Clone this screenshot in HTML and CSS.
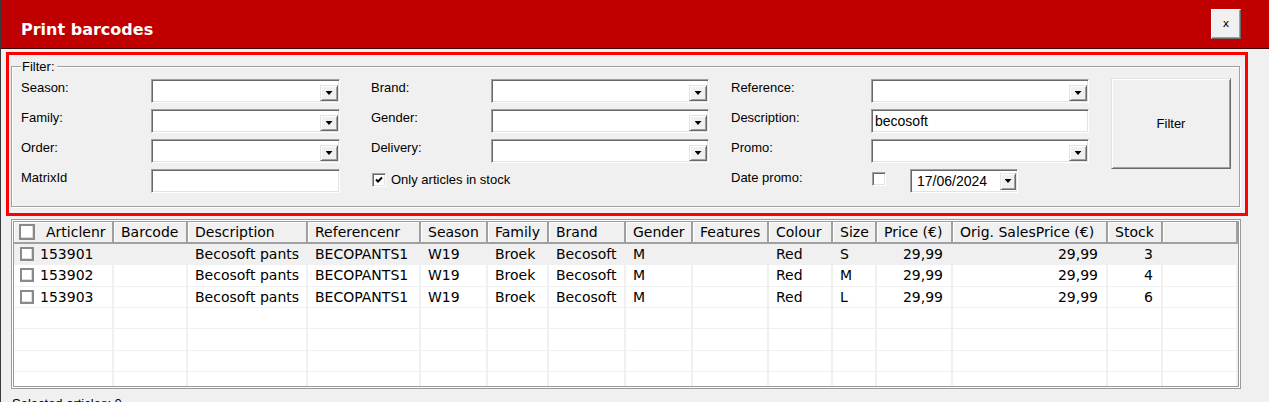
FILE: index.html
```html
<!DOCTYPE html>
<html lang="en">
  <head>
    <meta charset="UTF-8" />
    <meta name="viewport" content="width=device-width, initial-scale=1.0" />
    <title>Print barcodes</title>
    <link rel="stylesheet" href="styles.css">
  </head>
  <body>
    <div class="window">
      <div class="titlebar">
        <span class="title">Print barcodes</span>
        <button class="close">x</button>
      </div>

      <div class="highlight">
        <div class="groupbox">
          <span class="legend">Filter:</span>
          <div class="filters">
            <div class="filter-col col-a">
              <label>Season:</label>
              <div class="combo"><span class="drop"></span></div>
              <label>Family:</label>
              <div class="combo"><span class="drop"></span></div>
              <label>Order:</label>
              <div class="combo"><span class="drop"></span></div>
              <label>MatrixId</label>
              <div class="field"></div>
            </div>

            <div class="filter-col col-b">
              <label>Brand:</label>
              <div class="combo"><span class="drop"></span></div>
              <label>Gender:</label>
              <div class="combo"><span class="drop"></span></div>
              <label>Delivery:</label>
              <div class="combo"><span class="drop"></span></div>
              <div class="check-row">
                <span class="box checked"></span>
                <span>Only articles in stock</span>
              </div>
            </div>

            <div class="filter-col col-c">
              <label>Reference:</label>
              <div class="combo"><span class="drop"></span></div>
              <label>Description:</label>
              <div class="field field-text">becosoft</div>
              <label>Promo:</label>
              <div class="combo"><span class="drop"></span></div>
              <label>Date promo:</label>
              <div class="date-row">
                <span class="box"></span>
                <div class="datepicker">
                  <span>17/06/2024</span>
                  <span class="drop date-drop"></span>
                </div>
              </div>
            </div>

            <button class="filter-btn">Filter</button>
          </div>
        </div>
      </div>

      <div class="grid">
        <table>
          <colgroup>
            <col style="width:100px"><col style="width:74px"><col style="width:120px"><col style="width:113px">
            <col style="width:67px"><col style="width:61px"><col style="width:77px"><col style="width:67px">
            <col style="width:76px"><col style="width:64px"><col style="width:44px"><col style="width:76px">
            <col style="width:155px"><col style="width:55px"><col style="width:75px">
          </colgroup>
          <thead>
            <tr>
              <th class="first"><span class="gbox head-box"></span>Articlenr</th>
              <th>Barcode</th>
              <th>Description</th>
              <th>Referencenr</th>
              <th>Season</th>
              <th>Family</th>
              <th>Brand</th>
              <th>Gender</th>
              <th>Features</th>
              <th>Colour</th>
              <th>Size</th>
              <th>Price (€)</th>
              <th>Orig. SalesPrice (€)</th>
              <th>Stock</th>
              <th></th>
            </tr>
          </thead>
          <tbody>
            <tr class="current">
              <td class="first"><span class="gbox"></span>153901</td>
              <td></td><td>Becosoft pants</td><td>BECOPANTS1</td><td>W19</td><td>Broek</td><td>Becosoft</td><td>M</td><td></td><td>Red</td><td>S</td>
              <td class="num">29,99</td><td class="num">29,99</td><td class="num">3</td><td></td>
            </tr>
            <tr>
              <td class="first"><span class="gbox"></span>153902</td>
              <td></td><td>Becosoft pants</td><td>BECOPANTS1</td><td>W19</td><td>Broek</td><td>Becosoft</td><td>M</td><td></td><td>Red</td><td>M</td>
              <td class="num">29,99</td><td class="num">29,99</td><td class="num">4</td><td></td>
            </tr>
            <tr>
              <td class="first"><span class="gbox"></span>153903</td>
              <td></td><td>Becosoft pants</td><td>BECOPANTS1</td><td>W19</td><td>Broek</td><td>Becosoft</td><td>M</td><td></td><td>Red</td><td>L</td>
              <td class="num">29,99</td><td class="num">29,99</td><td class="num">6</td><td></td>
            </tr>
            <tr><td></td><td></td><td></td><td></td><td></td><td></td><td></td><td></td><td></td><td></td><td></td><td></td><td></td><td></td><td></td></tr>
            <tr><td></td><td></td><td></td><td></td><td></td><td></td><td></td><td></td><td></td><td></td><td></td><td></td><td></td><td></td><td></td></tr>
            <tr><td></td><td></td><td></td><td></td><td></td><td></td><td></td><td></td><td></td><td></td><td></td><td></td><td></td><td></td><td></td></tr>
            <tr><td></td><td></td><td></td><td></td><td></td><td></td><td></td><td></td><td></td><td></td><td></td><td></td><td></td><td></td><td></td></tr>
          </tbody>
        </table>
      </div>

      <div class="status">Selected articles: 0</div>
    </div>
  </body>
</html>
```

FILE: styles.css
```css
body {
  margin: 0;
  background: #f0f0f0;
  font-family: "Liberation Sans", Arial, sans-serif;
  font-size: 13px;
  color: #000;
  height: 402px;
  overflow: hidden;
}
.window {
  border-left: 1px solid #3a3a3a;
  height: 402px;
  box-sizing: border-box;
}
.titlebar {
  height: 48px;
  background: #c00000;
  border-bottom: 1px solid #400000;
  display: flex;
  align-items: center;
  justify-content: space-between;
  padding: 0 28px 0 20px;
}
.title {
  font-family: "DejaVu Sans", sans-serif;
  font-weight: bold;
  font-size: 16px;
  color: #fff;
  padding-top: 10px;
}
.close {
  width: 30px;
  height: 30px;
  padding: 0 0 2px;
  background: #f0f0f0;
  border: 1px solid;
  border-color: #fff #696969 #696969 #fff;
  box-shadow: inset -1px -1px 0 #a0a0a0;
  font-family: "DejaVu Sans", sans-serif;
  font-size: 11px;
  color: #000;
}

/* red frame round the filter */
.highlight {
  margin: 3px 0 0 5px;
  width: 1242px;
  box-sizing: border-box;
  border: 3px solid #ff0000;
  padding: 11px 5px 6px 2px;
}
.groupbox {
  position: relative;
  border: 1px solid #a0a0a0;
  box-shadow: inset 1px 1px 0 #fff, 1px 1px 0 #fff;
  padding: 12px 8px 13px 9px;
}
.legend {
  position: absolute;
  top: -8px;
  left: 9px;
  padding: 0 2px 0 1px;
  background: #f0f0f0;
  line-height: 15px;
}
.filters {
  display: flex;
  align-items: flex-start;
}
.filter-col {
  display: grid;
  grid-auto-rows: 24px;
  row-gap: 6px;
}
.col-a {
  grid-template-columns: 130px 189px;
  margin-right: 31px;
}
.col-b {
  grid-template-columns: 120px 218px;
  margin-right: 22px;
}
.col-c {
  grid-template-columns: 140px 218px;
  margin-right: 22px;
}
.filter-col label {
  line-height: 15px;
  padding-top: 1px;
}

.combo,
.field,
.datepicker {
  box-sizing: border-box;
  height: 24px;
  background: #fff;
  border: 1px solid;
  border-color: #a0a0a0 #fff #fff #a0a0a0;
  box-shadow: inset 1px 1px 0 #696969, inset -1px -1px 0 #e3e3e3;
}
.combo {
  display: flex;
  justify-content: flex-end;
  align-items: flex-end;
  padding: 0 1px 1px 0;
}
.field-text {
  font-size: 14px;
  line-height: 20px;
  padding: 1px 3px 0;
}
.drop {
  box-sizing: border-box;
  width: 18px;
  height: 16px;
  background: #f0f0f0;
  border: 1px solid;
  border-color: #e3e3e3 #696969 #696969 #e3e3e3;
  box-shadow: inset 1px 1px 0 #fff, inset -1px -1px 0 #a0a0a0;
  display: flex;
  align-items: center;
  justify-content: center;
}
.drop::after {
  content: "";
  width: 7px;
  height: 4px;
  background: #000;
  clip-path: polygon(0 0, 100% 0, 50% 100%);
}

.box {
  box-sizing: border-box;
  width: 14px;
  height: 14px;
  background: #fff;
  border: 1px solid;
  border-color: #a0a0a0 #fff #fff #a0a0a0;
  box-shadow: inset 1px 1px 0 #696969, inset -1px -1px 0 #e3e3e3;
  flex-shrink: 0;
}
.box.checked {
  background: #fff url("data:image/svg+xml,%3Csvg xmlns='http://www.w3.org/2000/svg' width='12' height='12'%3E%3Cpath d='M3 5.5l2 2 4-4' fill='none' stroke='%23000' stroke-width='2'/%3E%3C/svg%3E") no-repeat center;
}
.check-row {
  grid-column: 1 / -1;
  display: flex;
  align-items: center;
  gap: 5px;
  padding-left: 1px;
  margin-top: -3px;
}
.date-row {
  display: flex;
  align-items: center;
  gap: 24px;
  padding-left: 1px;
}
.date-row .box {
  margin-top: -5px;
}
.datepicker {
  width: 108px;
  display: flex;
  align-items: center;
  justify-content: space-between;
  padding: 0 1px 0 6px;
  font-size: 14px;
}
.date-drop {
  width: 16px;
  height: 17px;
}
.filter-btn {
  width: 120px;
  height: 91px;
  margin-top: -1px;
  background: #f0f0f0;
  border: 1px solid;
  border-color: #e3e3e3 #696969 #696969 #e3e3e3;
  box-shadow: inset 1px 1px 0 #fff, inset -1px -1px 0 #a0a0a0;
  font-family: "Liberation Sans", Arial, sans-serif;
  font-size: 13px;
  color: #000;
  padding: 0;
}

/* article grid */
.grid {
  margin: 3px 0 0 10px;
  width: 1230px;
  height: 170px;
  box-sizing: border-box;
  border: 3px double #9a9a9a;
  background: #fff;
  overflow: hidden;
}
.grid table {
  width: 1224px;
  table-layout: fixed;
  border-collapse: separate;
  border-spacing: 0;
  font-family: "DejaVu Sans", sans-serif;
  font-size: 14px;
}
.grid th {
  box-sizing: border-box;
  height: 22px;
  padding: 0 4px 0 7px;
  background: #f0f0f0;
  border-right: 2px solid #a0a0a0;
  border-bottom: 2px solid #a0a0a0;
  box-shadow: inset 1px 1px 0 #fff;
  font-weight: normal;
  text-align: left;
  white-space: nowrap;
  overflow: hidden;
}
.grid td {
  box-sizing: border-box;
  height: 21.33px;
  padding: 0 4px 0 7px;
  border-right: 2px solid #f0f0f0;
  border-bottom: 1px solid #f0f0f0;
  white-space: nowrap;
  overflow: hidden;
}
.grid tr.current td {
  background: #f0f0f0;
}
.grid td.num {
  text-align: right;
  padding-right: 8px;
}
.grid .first {
  padding-left: 5px;
}
.grid td.first {
  padding-left: 6px;
}
.gbox {
  display: inline-block;
  box-sizing: border-box;
  width: 14px;
  height: 14px;
  margin-right: 6px;
  vertical-align: -2px;
  background: #fff;
  border: 2px solid #8a8a8a;
  box-shadow: inset -1px -1px 0 #dcdcdc;
}
.head-box {
  width: 16px;
  height: 16px;
  margin-right: 11px;
  vertical-align: -3px;
}
.status {
  margin: 7px 0 0 11px;
  line-height: 15px;
}
```
